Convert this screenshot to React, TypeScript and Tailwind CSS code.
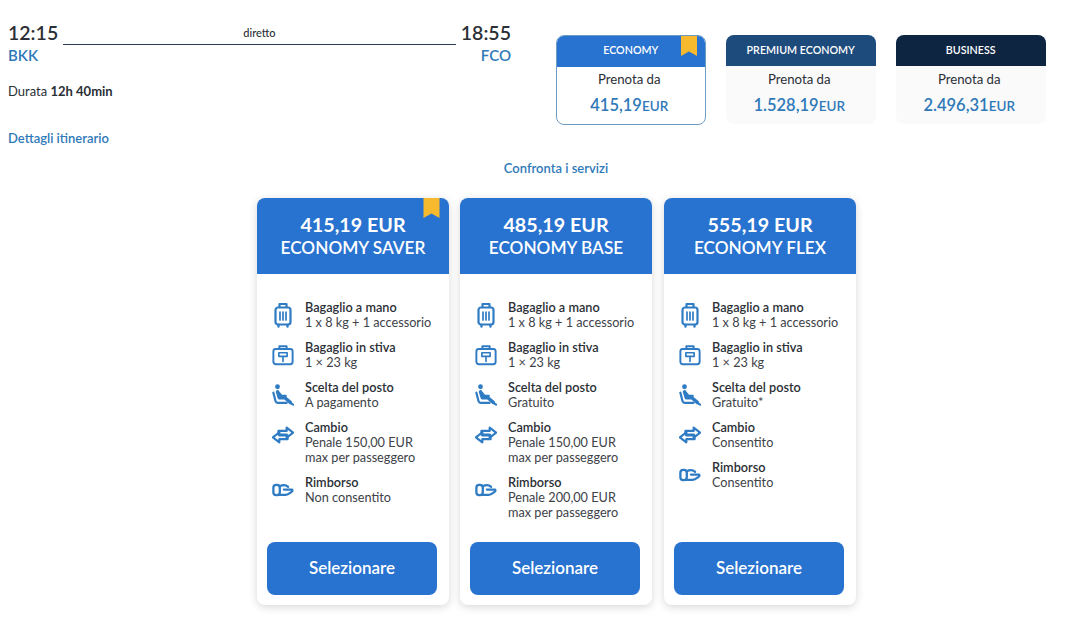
const SuitcaseIcon = () => (
  <svg viewBox="0 0 22 26" className="w-[22px] h-[26px]" fill="none" stroke="#2f7cc4" strokeWidth="2.2" strokeLinecap="round" strokeLinejoin="round">
    <path d="M7.500 5V2h7v3" />
    <rect x="3.500" y="5.500" width="15" height="17" rx="2.500" />
    <path d="M8 10v8M11 10v8M14 10v8" strokeWidth="1.700" />
    <path d="M6.500 23v1.500M15.500 23v1.500" strokeWidth="2.400" />
  </svg>
);

const HoldIcon = () => (
  <svg viewBox="0 0 24 24" className="w-[22px] h-[22px]" fill="none" stroke="#2f7cc4" strokeWidth="2.100" strokeLinecap="round" strokeLinejoin="round">
    <path d="M8 5.500V2.500h8v3" />
    <rect x="1.500" y="5.500" width="21" height="16.500" rx="2.600" />
    <path d="M7.500 9.500h9v4h-9zM12 13.500V19" strokeWidth="1.800" />
  </svg>
);

const SeatIcon = () => (
  <svg viewBox="0 0 24 24" className="w-[22px] h-[22px]" fill="none" stroke="#2f7cc4" strokeLinecap="round" strokeLinejoin="round">
    <circle cx="6" cy="3" r="2.600" fill="#2f7cc4" stroke="none" />
    <path d="M6 8.500 8 15h6l6 5" strokeWidth="3.800" />
    <path d="M7.500 9.500l3 3.500h4.500" strokeWidth="2.400" />
    <path d="M1.500 9.500 3.800 18.500q.5 2 2.500 2H16M20 20.500l3 2" strokeWidth="2.400" />
  </svg>
);

const SwapIcon = () => (
  <svg viewBox="0 0 24 24" className="w-[22px] h-[22px]" fill="none" stroke="#2f7cc4" strokeWidth="2.400" strokeLinecap="round" strokeLinejoin="round">
    <path d="M7 11.500V7.500h9V4l7 5.500-7 5.500v-3.500H7z" />
    <path d="M17 12.500v4H8V20l-7-5.500L8 9v3.500h9z" />
  </svg>
);

const RefundIcon = () => (
  <svg viewBox="0 0 24 24" className="w-[22px] h-[22px]" fill="none" stroke="#2f7cc4" strokeWidth="2.500" strokeLinecap="round" strokeLinejoin="round">
    <rect x="1.500" y="6.500" width="7" height="11" rx="3" />
    <path d="M8.500 8c2.500-1.500 5-1.800 7-.8l2 1.300" />
    <path d="M13 11.500h9c.8 1.200 0 2.200-1 2.800-2 1.500-3.500 3-6 3H7" />
  </svg>
);

const Bookmark = ({ small }: { small?: boolean }) => (
  <svg viewBox="0 0 16 20" className={small ? "absolute top-0 right-[8px] w-[16px] h-[20px]" : "absolute top-0 right-[9px] w-[17px] h-[20px]"} fill="#f7b92e">
    <path d="M0 0h16v20l-8-4.500L0 20z" />
  </svg>
);

const fareTabs = [
  { name: "ECONOMY", price: "415,19", head: "bg-[#2872d0]", selected: true },
  { name: "PREMIUM ECONOMY", price: "1.528,19", head: "bg-[#1c4b7c]", selected: false },
  { name: "BUSINESS", price: "2.496,31", head: "bg-[#0e2542]", selected: false },
];

const hand = { icon: <SuitcaseIcon />, title: "Bagaglio a mano", lines: ["1 x 8 kg + 1 accessorio"] };
const hold = { icon: <HoldIcon />, title: "Bagaglio in stiva", lines: ["1 × 23 kg"] };

const plans = [
  {
    price: "415,19 EUR",
    name: "ECONOMY SAVER",
    bookmark: true,
    rows: [
      hand,
      hold,
      { icon: <SeatIcon />, title: "Scelta del posto", lines: ["A pagamento"] },
      { icon: <SwapIcon />, title: "Cambio", lines: ["Penale 150,00 EUR", "max per passeggero"] },
      { icon: <RefundIcon />, title: "Rimborso", lines: ["Non consentito"] },
    ],
  },
  {
    price: "485,19 EUR",
    name: "ECONOMY BASE",
    bookmark: false,
    rows: [
      hand,
      hold,
      { icon: <SeatIcon />, title: "Scelta del posto", lines: ["Gratuito"] },
      { icon: <SwapIcon />, title: "Cambio", lines: ["Penale 150,00 EUR", "max per passeggero"] },
      { icon: <RefundIcon />, title: "Rimborso", lines: ["Penale 200,00 EUR", "max per passeggero"] },
    ],
  },
  {
    price: "555,19 EUR",
    name: "ECONOMY FLEX",
    bookmark: false,
    rows: [
      hand,
      hold,
      { icon: <SeatIcon />, title: "Scelta del posto", lines: ["Gratuito*"] },
      { icon: <SwapIcon />, title: "Cambio", lines: ["Consentito"] },
      { icon: <RefundIcon />, title: "Rimborso", lines: ["Consentito"] },
    ],
  },
];

export default function App() {
  return (
    <div className="w-[1084px] h-[636px] overflow-hidden bg-white font-['Lato','Open_Sans',sans-serif] text-[#2b2f36]">
      {/* Top: itinerary + fare tabs */}
      <div className="flex h-[158px]">
        <div className="w-[503px] ml-2 pt-[21px]">
          <div className="flex items-start">
            <div className="text-[19.5px] leading-[23px] font-semibold">12:15</div>
            <div className="relative flex-1 mx-[5px] h-[24px] border-b border-[#2a3f55]">
              <span className="absolute left-0 right-0 top-[5px] text-center text-[11px] leading-[14px] font-medium">diretto</span>
            </div>
            <div className="text-[19.5px] leading-[23px] font-semibold">18:55</div>
          </div>
          <div className="flex justify-between mt-[1px] text-[15px] leading-[18px] font-semibold text-[#2f79b9]">
            <span>BKK</span>
            <span>FCO</span>
          </div>
          <div className="mt-[19px] text-[13px] leading-[16px]">
            Durata <span className="font-bold">12h 40min</span>
          </div>
          <div className="mt-[31px] text-[13px] leading-[16px] font-semibold text-[#2f79b9]">Dettagli itinerario</div>
        </div>
        <div className="ml-[45px] mt-[35px] flex gap-[20.5px] items-start">
          {fareTabs.map((tab) => (
            <div
              key={tab.name}
              className={
                tab.selected
                  ? "relative w-[149.5px] h-[90px] rounded-[8px] border border-[#6f9cc4] bg-white overflow-hidden"
                  : "relative w-[149.5px] h-[89px] rounded-[8px] bg-[#fafafa] overflow-hidden"
              }
            >
              <div
                className={
                  tab.selected
                    ? `${tab.head} h-[31px] pb-[3px] flex items-center justify-center text-[10.7px] font-semibold text-white`
                    : `${tab.head} h-[31px] pb-[1px] flex items-center justify-center text-[10.7px] font-semibold text-white`
                }
              >
                {tab.name}
              </div>
              {tab.selected && <Bookmark small />}
              <div className={tab.selected ? "mt-[4px] pr-[3px] text-center text-[13.2px] leading-[16px]" : "mt-[5px] pr-[3px] text-center text-[13.2px] leading-[16px]"}>
                Prenota da
              </div>
              <div className="mt-[7px] pr-[3px] text-center text-[#2f79b9] font-semibold text-[16.5px] leading-[22px]">
                {tab.price}
                <span className="text-[13.5px]">EUR</span>
              </div>
            </div>
          ))}
        </div>
      </div>

      <div className="h-[20px] pl-[28px] text-center text-[13px] leading-[20px] font-semibold text-[#2f79b9]">Confronta i servizi</div>

      {/* Plan cards */}
      <div className="mt-[20px] ml-[257px] flex gap-[11px]">
        {plans.map((plan) => (
          <div key={plan.name} className="relative w-[192px] h-[407px] flex flex-col rounded-[8px] bg-white shadow-[0_2px_8px_rgba(0,0,0,0.16)] overflow-hidden last:ml-[1px]">
            <div className="h-[76px] bg-[#2872d0] pt-[15px] text-center text-white">
              <div className="text-[19.7px] leading-[24px] font-bold">{plan.price}</div>
              <div className="text-[17.2px] leading-[22px] font-semibold">{plan.name}</div>
            </div>
            {plan.bookmark && <Bookmark />}
            <div className="flex-1 flex flex-col gap-[10px] pt-[26px] pl-[13px]">
              {plan.rows.map((row) => (
                <div key={row.title} className="flex items-start">
                  <div className="w-[35px] h-[30px] pl-[2px] flex items-center">{row.icon}</div>
                  <div className="text-[12.7px] leading-[15px] text-[#3d4248]">
                    <div className="font-semibold text-[#2b2f36]">{row.title}</div>
                    {row.lines.map((line) => (
                      <div key={line}>{line}</div>
                    ))}
                  </div>
                </div>
              ))}
            </div>
            <button className="ml-[10px] w-[170px] mb-[10px] h-[53px] pb-[2px] rounded-[8px] bg-[#2872d0] text-white text-[17px] font-semibold">
              Selezionare
            </button>
          </div>
        ))}
      </div>
    </div>
  );
}
